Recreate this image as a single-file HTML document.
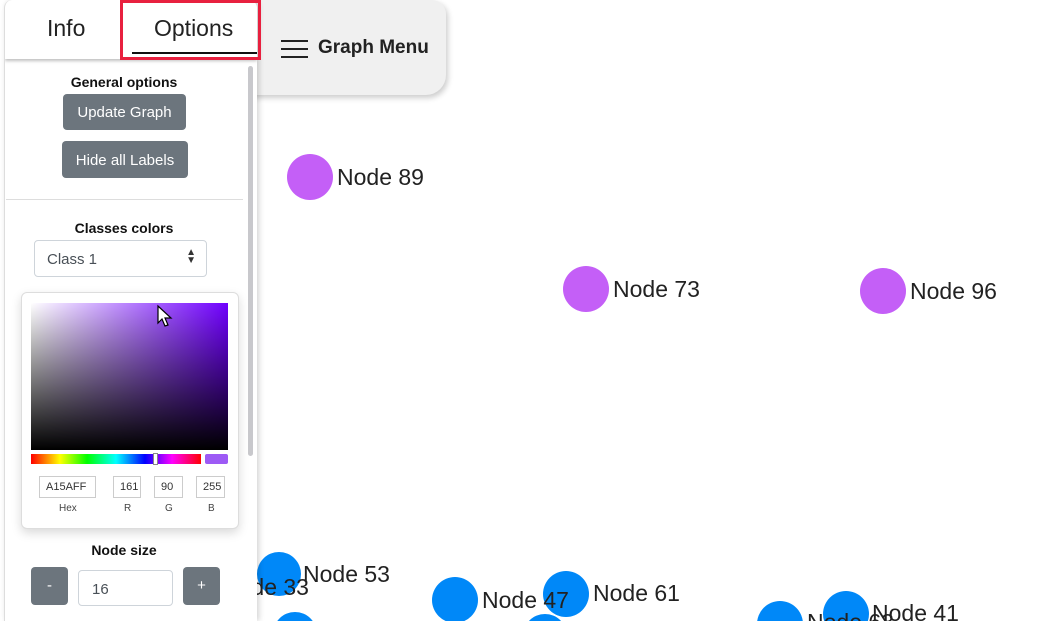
<!DOCTYPE html>
<html><head><meta charset="utf-8">
<style>
*{box-sizing:border-box;margin:0;padding:0}
html,body{width:1047px;height:621px;overflow:hidden}
body{background:#fff;font-family:"Liberation Sans",sans-serif;position:relative}
#g{position:absolute;left:0;top:0;display:block}
.menu{position:absolute;left:250px;top:0;width:196px;height:95px;background:#f0f0f0;border-radius:0 14px 20px 0;box-shadow:2px 3px 6px rgba(0,0,0,.2)}
.menu .ham{position:absolute;left:31px;top:40px;width:27px}
.menu .ham i{display:block;height:2px;background:#222;margin-bottom:6px}
.menu b{position:absolute;left:68px;top:37px;font-size:19px;color:#222}
.panel{position:absolute;left:4px;top:0;width:253px;height:621px;background:#fff;box-shadow:2px 0 6px rgba(0,0,0,.18);border-radius:8px 8px 0 0;border-left:1px solid #ddd;overflow:hidden}
.tabs{height:59px;position:relative;box-shadow:0 2px 3px rgba(0,0,0,.25)}
.tab{position:absolute;top:15px;font-size:23px;color:#222}
.red{position:absolute;left:120px;top:0;width:141px;height:60px;border:3px solid #e8203f}
.ul{position:absolute;left:127px;top:52px;width:128px;height:2px;background:#111}
.sb{position:absolute;left:243px;top:66px;width:5px;height:390px;background:#c8c8cc;border-radius:3px}
.c{position:absolute;left:0;width:238px;text-align:center}
h5{font-size:14px;font-weight:bold;color:#111}
.btn{position:absolute;background:#6c757d;color:#fff;border-radius:4px;font-size:15px;text-align:center}
hr{position:absolute;left:1px;top:199px;width:237px;border:0;border-top:1px solid #ddd}
.sel{position:absolute;left:29px;top:240px;width:173px;height:37px;border:1px solid #ced4da;border-radius:4px;font-size:15px;color:#495057;padding:10px 12px}
.picker{position:absolute;left:16px;top:292px;width:218px;height:237px;border:1px solid #ddd;border-radius:6px;box-shadow:0 4px 10px rgba(0,0,0,.15);background:#fff}
.sat{position:absolute;left:9px;top:10px;width:197px;height:147px;background:linear-gradient(to top,#000,transparent),linear-gradient(to right,#fff,#7000ff)}
.hue{position:absolute;left:9px;top:161px;width:170px;height:10px;background:linear-gradient(to right,#f00,#ff0 17%,#0f0 33%,#0ff 50%,#00f 67%,#f0f 83%,#f00)}
.hk{position:absolute;left:131px;top:160px;width:5px;height:12px;background:#fff;border:1px solid #888}
.sw{position:absolute;left:183px;top:161px;width:23px;height:10px;background:#9d5af5;border-radius:2px}
.in{position:absolute;top:183px;height:22px;border:1px solid #ccc;font-size:11px;color:#333;padding:4px 6px}
.lb{position:absolute;top:210px;font-size:10px;color:#444}
</style></head><body>
<svg id="g" width="1047" height="621">
<g fill="#c45ff7"><circle cx="310" cy="177" r="23"/><circle cx="586" cy="289" r="23"/><circle cx="883" cy="291" r="23"/></g>
<g font-family="Liberation Sans,sans-serif" font-size="23" fill="#222">
<text x="337" y="185">Node 89</text><text x="613" y="297">Node 73</text><text x="910" y="299">Node 96</text></g>
<g fill="#0088f8"><circle cx="279" cy="574" r="22"/><circle cx="295" cy="634" r="22"/><circle cx="455" cy="600" r="23"/><circle cx="566" cy="594" r="23"/><circle cx="545" cy="636" r="22"/><circle cx="780" cy="624" r="23"/><circle cx="846" cy="614" r="23"/></g>
<g font-family="Liberation Sans,sans-serif" font-size="23" fill="#222">
<text x="222" y="595">Node 33</text><text x="303" y="582">Node 53</text><text x="482" y="608">Node 47</text><text x="593" y="601">Node 61</text><text x="807" y="630">Node 63</text><text x="872" y="621">Node 41</text></g>
</svg>
<div class="menu"><div class="ham"><i></i><i></i><i></i></div><b>Graph Menu</b></div>
<div class="panel">
<div class="tabs"><span class="tab" style="left:42px">Info</span><span class="tab" style="left:149px">Options</span><div class="ul"></div></div>
<div class="sb"></div>
<div class="c" style="top:74px"><h5>General options</h5></div>
<div class="btn" style="left:58px;top:94px;width:123px;height:36px;line-height:38px">Update Graph</div>
<div class="btn" style="left:57px;top:141px;width:126px;height:37px;line-height:39px">Hide all Labels</div>
<hr>
<div class="c" style="top:220px"><h5>Classes colors</h5></div>
<div class="sel">Class 1<span style="position:absolute;right:10px;top:8px;font-size:10px;line-height:8px;color:#333">▲<br>▼</span></div>
<div class="picker">
<div class="sat"></div>
<svg style="position:absolute;left:134px;top:10px" width="20" height="30"><path d="M2 3 L2 20 L6 16 L9 23 L12 22 L9 15 L15 15 Z" fill="#fff" stroke="#000" stroke-width="1.2"/></svg>
<div class="hue"></div><div class="hk"></div><div class="sw"></div>
<div class="in" style="left:17px;width:57px">A15AFF</div>
<div class="in" style="left:91px;width:28px">161</div>
<div class="in" style="left:132px;width:29px">90</div>
<div class="in" style="left:174px;width:29px">255</div>
<span class="lb" style="left:37px">Hex</span><span class="lb" style="left:102px">R</span><span class="lb" style="left:143px">G</span><span class="lb" style="left:186px">B</span>
</div>
<div class="c" style="top:542px"><h5>Node size</h5></div>
<div class="btn" style="left:26px;top:567px;width:37px;height:38px;line-height:38px">-</div>
<div style="position:absolute;left:73px;top:570px;width:95px;height:36px;border:1px solid #ced4da;border-radius:4px;font-size:15px;color:#495057;padding:10px 13px">16</div>
<div class="btn" style="left:178px;top:567px;width:37px;height:38px;line-height:38px">+</div>
</div>
<div class="red"></div>
</body></html>
